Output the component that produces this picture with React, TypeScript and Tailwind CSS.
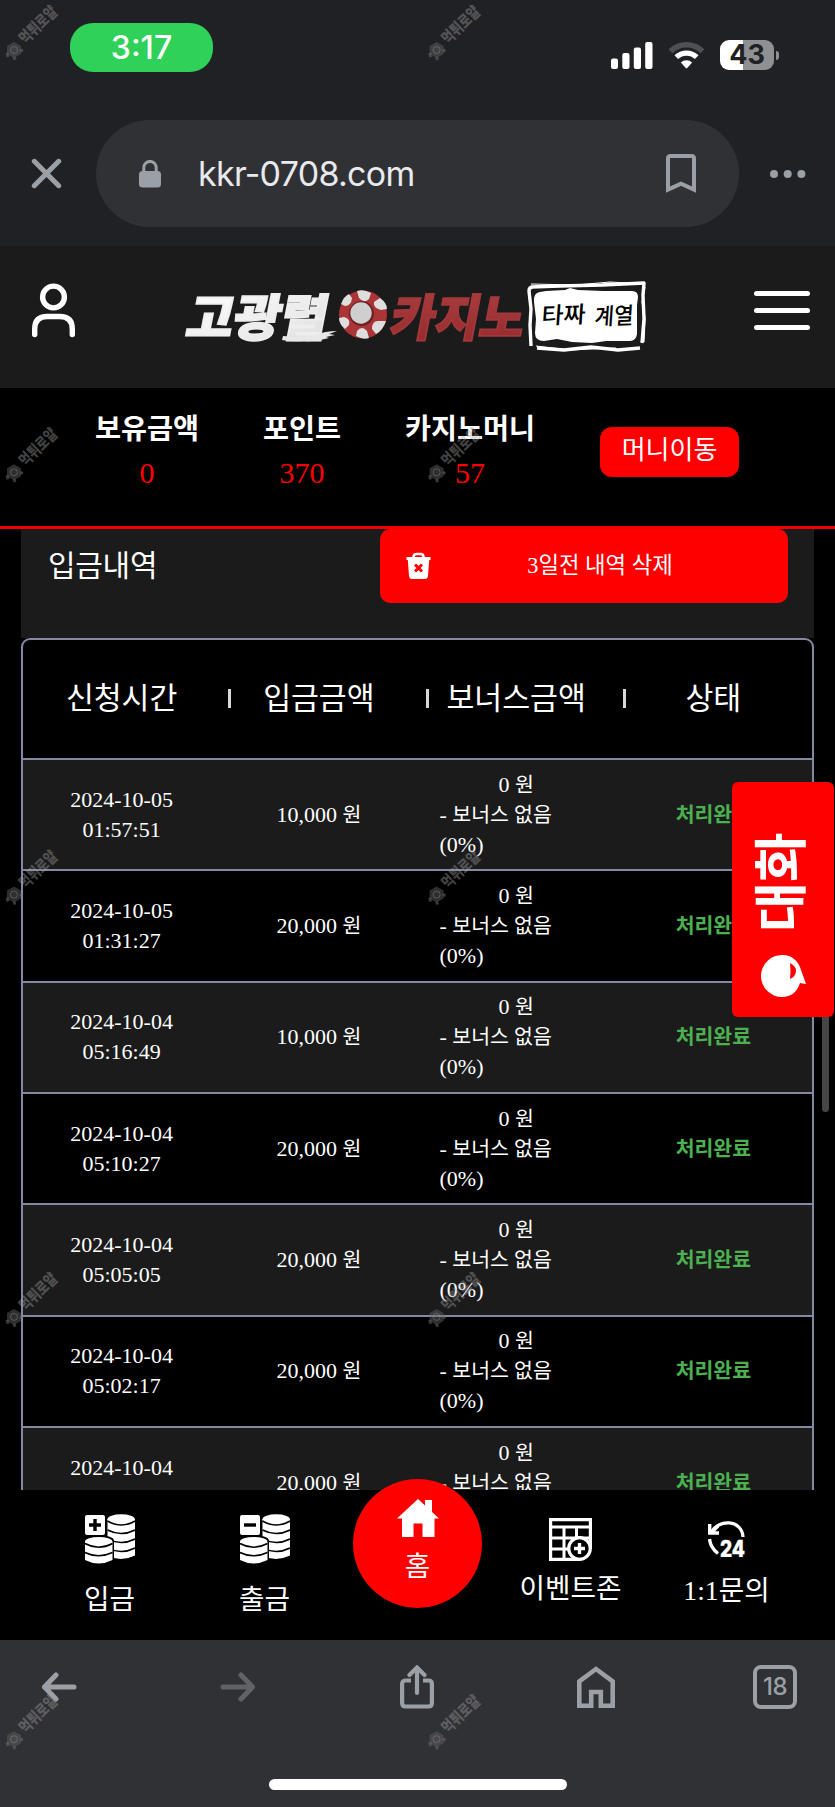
import type { ReactNode } from "react";

interface Deposit {
  date: string;
  time: string;
  amount: string;
}

const DEPOSITS: Deposit[] = [
  { date: "2024-10-05", time: "01:57:51", amount: "10,000" },
  { date: "2024-10-05", time: "01:31:27", amount: "20,000" },
  { date: "2024-10-04", time: "05:16:49", amount: "10,000" },
  { date: "2024-10-04", time: "05:10:27", amount: "20,000" },
  { date: "2024-10-04", time: "05:05:05", amount: "20,000" },
  { date: "2024-10-04", time: "05:02:17", amount: "20,000" },
  { date: "2024-10-04", time: "04:41:14", amount: "20,000" },
];

const HEADERS = ["신청시간", "입금금액", "보너스금액", "상태"];

export default function App() {
  return (
    <div className="relative flex h-[1807px] w-[835px] flex-col overflow-hidden bg-black text-white [font-family:'Liberation_Serif','Noto_Sans_CJK_KR',serif]">
      <StatusBar />
      <AddressBar />
      <SiteHeader />
      <BalanceBar />
      <History />
      <SiteNav />
      <BrowserToolbar />

      {/* Scroll thumb */}
      <div className="absolute top-[940px] left-[822px] h-[172px] w-[7px] rounded-full bg-[#464646]" />
      <ChatTab />
      <Watermarks />
    </div>
  );
}

function StatusBar() {
  return (
    <div className="flex h-[96px] shrink-0 items-start bg-[#202124] pt-[23px] pl-[70px] [font-family:Inter,sans-serif]">
      <div className="flex h-[49px] w-[143px] items-center justify-center rounded-[23px] bg-[#30d158] text-[32px] font-medium">
        <span className="pt-px">3:17</span>
      </div>
      <svg className="mt-[17px] ml-[398px]" width="42" height="30" viewBox="0 0 42 30" fill="#fff">
        <rect x="0" y="18.5" width="7" height="10.5" rx="2" />
        <rect x="11.3" y="13" width="7.2" height="16" rx="2" />
        <rect x="22.8" y="7.5" width="7.2" height="21.5" rx="2" />
        <rect x="34.2" y="2" width="7.3" height="27" rx="2" />
      </svg>
      <svg className="mt-[17px] ml-[15px]" width="37" height="30" viewBox="0 0 37 30">
        <path d="M2.5 11.2a23 23 0 0 1 32 0" fill="none" stroke="#4f5053" strokeWidth="5.4" />
        <path d="M8.3 17.2a14.6 14.6 0 0 1 20.4 0" fill="none" stroke="#fff" strokeWidth="5.2" />
        <path d="M12.8 22.5a8.3 8.3 0 0 1 11.4 0l-5 5.6q-.7.8-1.4 0z" fill="#fff" />
      </svg>
      <div className="mt-[17px] ml-[15px] flex items-center">
        <div className="flex h-[30px] w-[54px] items-center justify-center rounded-[9px] bg-[linear-gradient(90deg,#fff_43%,#8f9092_43%)] text-[27px] font-bold text-[#202124]">
          43
        </div>
        <div className="ml-[2px] h-[9px] w-[3px] rounded-r-full bg-[#8f9092]" />
      </div>
    </div>
  );
}

function AddressBar() {
  return (
    <div className="flex h-[150px] shrink-0 items-start bg-[#202124] pt-[24px] [font-family:Inter,sans-serif]">
      <svg className="mt-[38px] ml-[31px]" width="31" height="31" viewBox="0 0 31 31" stroke="#9aa0a6" strokeWidth="5" strokeLinecap="round">
        <path d="M3.3 3.3l24.4 24.4M27.7 3.3L3.3 27.7" />
      </svg>
      <div className="ml-[34px] flex h-[107px] w-[643px] items-center rounded-full bg-[#303134] pl-[43px]">
        <svg width="22" height="28" viewBox="0 0 22 28">
          <path d="M4.8 13V7.6a6.2 6.2 0 0 1 12.4 0V13" fill="none" stroke="#9aa0a6" strokeWidth="3" />
          <rect x="0" y="11" width="22" height="16.5" rx="3.5" fill="#9aa0a6" />
        </svg>
        <span className="ml-[37px] w-[468px] text-[34px] tracking-[-0.7px] text-[#e8eaed]">kkr-0708.com</span>
        <svg width="30" height="39" viewBox="0 0 30 39" fill="none" stroke="#9aa0a6" strokeWidth="4">
          <path d="M2 35.6V4.5Q2 2 4.500 2h21Q28 2 28 4.500v31.100l-13-6z" />
        </svg>
      </div>
      <svg className="mt-[50px] ml-[31px]" width="36" height="8" viewBox="0 0 36 8" fill="#9aa0a6">
        <circle cx="4" cy="4" r="4" />
        <circle cx="17.700" cy="4" r="4" />
        <circle cx="31.400" cy="4" r="4" />
      </svg>
    </div>
  );
}

function SiteHeader() {
  return (
    <header className="flex h-[142px] shrink-0 items-start bg-[#1b1b1b]">
      <svg className="mt-[36px] ml-[32px]" width="43" height="56" viewBox="0 0 43 56" fill="none" stroke="#fff" strokeWidth="5.400">
        <circle cx="21.500" cy="15" r="10.900" />
        <path d="M2.700 52.500V47q0-12.500 12.500-12.500h12.600q12.500 0 12.500 12.500v5.500" strokeLinecap="round" />
      </svg>
      <Logo />
      <div className="mt-[45px] ml-[104px] flex w-[56px] flex-col gap-3">
        <div className="h-[5px] rounded-full bg-white" />
        <div className="h-[5px] rounded-full bg-white" />
        <div className="h-[5px] rounded-full bg-white" />
      </div>
    </header>
  );
}

function Logo() {
  return (
    <svg className="mt-[29px] ml-[105px] [font-family:'Noto_Sans_CJK_KR',sans-serif]" width="470" height="84" viewBox="180 275 470 84">
      <defs>
        <linearGradient id="steel" x1="0" y1="0" x2="1" y2="1">
          <stop offset="0" stopColor="#fff" />
          <stop offset="0.600" stopColor="#ededed" />
          <stop offset="1" stopColor="#dcdcdc" />
        </linearGradient>
        <linearGradient id="blood" x1="0" y1="0" x2="0" y2="1">
          <stop offset="0" stopColor="#ac4042" />
          <stop offset="1" stopColor="#94282b" />
        </linearGradient>
      </defs>
      <g fontSize="50" fontWeight="900">
        <text transform="translate(184 335.500) skewX(-11)" textLength="141" lengthAdjust="spacingAndGlyphs" fill="url(#steel)" stroke="#eee" strokeWidth="1.800">
          고광렬
        </text>
        <text transform="translate(388 335.500) skewX(-11)" textLength="134" lengthAdjust="spacingAndGlyphs" fill="url(#blood)" stroke="#a3383a" strokeWidth="1.800">
          카지노
        </text>
      </g>
      {/* Brush tail */}
      <path d="M283 336q18 2 31-1 12-4 23-4l-8 3 6 1-9 2 3 1q-13 4-25 3-14 1-22-1z" fill="#e8e8e8" />

      {/* Casino chip */}
      <circle cx="363" cy="314.500" r="24" fill="#ab3436" />
      <g fill="#dedede">
        <path d="M357 291q7-2 14 2l-2 6q-5 5-10-1z" />
        <path d="M380 298q7 5 7 11l-6 1q-8-2-7-8z" />
        <path d="M386 321q-3 9-10 13l-4-5q0-8 6-8z" />
        <path d="M369 338q-6 2-13-2l1-5q5-6 10 0z" />
        <path d="M345 329q-6-5-6-11l5-1q7 2 5 8z" />
        <path d="M341 304q3-8 8-10l3 4q-1 8-7 8z" />
      </g>
      <circle cx="361.500" cy="313.500" r="12.500" fill="#6d2224" />
      <circle cx="361" cy="313" r="10.700" fill="#cfcfcf" />

      {/* Ink stamp */}
      <path
        d="M531 287l29-1 42-1 42-2-1 12 1 24-2 24M640 348l-22 2-27-3-27 3-27-2M531 346l-1-21 1-16-2-18q0-4 4-4"
        fill="none"
        stroke="#fff"
        strokeWidth="3.400"
        strokeLinejoin="round"
      />
      <path d="M531 284l45 1 34-3 35 2M645 287l-3 15 3 16-1 24M536 346l34 4 46-2" fill="none" stroke="#fff" strokeWidth="1.200" />
      <path
        d="M540 292l6-1 19-1 5-2 8 2 25 1 29 0q6 0 6 6l-1 8 0 29q-1 7-7 7l-24 0-14 2-20-1-15-3-13 2q-9 0-9-8l1-14-2-17q-1-9 6-10z"
        fill="#fff"
      />
      <g fill="#000" fontSize="23" fontWeight="500">
        <text transform="translate(541 324) rotate(-2) skewX(-6)" textLength="44" lengthAdjust="spacingAndGlyphs">
          타짜
        </text>
        <text transform="translate(594 325) rotate(-2) skewX(-6)" textLength="39" lengthAdjust="spacingAndGlyphs">
          계열
        </text>
      </g>
    </svg>
  );
}

function Balance({ label, value, width }: { label: string; value: string; width: string }) {
  return (
    <div className={`flex flex-col items-center ${width}`}>
      <span className="text-[28.300px] leading-[44px] font-bold whitespace-nowrap">{label}</span>
      <span className="text-[30px] leading-[42px]">
        <span className="text-[#ff0000]">{value}</span>
      </span>
    </div>
  );
}

function BalanceBar() {
  return (
    <div className="flex h-[141px] shrink-0 items-start border-b-[3px] border-[#f00000] bg-black pt-[20px] pl-[72px]">
      <Balance label="보유금액" value="0" width="w-[150px]" />
      <Balance label="포인트" value="370" width="w-[160px]" />
      <Balance label="카지노머니" value="57" width="w-[176px]" />
      <button className="mt-[19px] ml-[42px] h-[50px] w-[139px] rounded-xl bg-[#ff0000] pb-[3px] text-[26px] leading-none">
        머니이동
      </button>
    </div>
  );
}

function History() {
  return (
    <main className="flex h-[961px] shrink-0 flex-col overflow-hidden px-[21px]">
      <div className="flex h-[109px] w-[793px] shrink-0 items-start bg-[#1b1b1b] pl-[27px]">
        <h2 className="mt-[15px] w-[332px] text-[30px] leading-[44px] tracking-[-0.300px]">입금내역</h2>
        <button className="flex h-[74px] w-[408px] items-center rounded-[10px] bg-[#ff0000] pl-[26px]">
          <svg width="25" height="28" viewBox="0 0 25 28">
            <path d="M7.500 5q0-3 3-3h4q3 0 3 3" fill="none" stroke="#fff" strokeWidth="2.500" />
            <path d="M.5 5h24v3h-1.300L22 24q-.3 3-3.300 3H6.300q-3 0-3.300-3L1.800 8H.5z" fill="#fff" />
            <path d="M9 12.500l7 7M16 12.500l-7 7" stroke="#f00" strokeWidth="3" />
          </svg>
          <span className="w-[338px] pb-px text-center text-[22.300px]">3일전 내역 삭제</span>
        </button>
      </div>

      <div className="w-[793px] shrink-0 rounded-t-[9px] border-2 border-[#8389a5]">
        <div className="grid h-[118px] grid-cols-4 items-center">
          {HEADERS.map((header, i) => (
            <div key={header} className="relative text-center text-[30.300px] leading-[44px]">
              {header}
              {i < HEADERS.length - 1 && <i className="absolute top-[12px] right-[-11px] h-[19px] w-[3px] bg-[#d8d8d8]" />}
            </div>
          ))}
        </div>
        {DEPOSITS.map((deposit, i) => (
          <DepositRow key={i} deposit={deposit} />
        ))}
      </div>
    </main>
  );
}

function Won() {
  return <span className="text-[20.500px]">원</span>;
}

function DepositRow({ deposit }: { deposit: Deposit }) {
  return (
    <div className="grid h-[111.330px] grid-cols-4 items-center border-t-2 border-[#8389a5] text-center text-[22px] leading-[30px] odd:bg-black even:bg-[#1b1b1b]">
      <div>
        {deposit.date}
        <br />
        {deposit.time}
      </div>
      <div>
        {deposit.amount} <Won />
      </div>
      <div className="px-[22px]">
        <div>
          0 <Won />
        </div>
        <div className="text-left">
          - <span className="text-[20.500px]">보너스 없음</span>
          <br />
          (0%)
        </div>
      </div>
      <div className="text-[20.500px] font-bold text-[#4caf50]">처리완료</div>
    </div>
  );
}

function ChatTab() {
  return (
    <div className="absolute top-[782px] left-[732px] flex h-[235px] w-[102px] flex-col items-center rounded-md bg-[#ff0000] pt-[45px]">
      <div className="flex h-[110px] w-[102px] items-center justify-center">
        <span className="-rotate-90 text-[54px] leading-none font-bold whitespace-nowrap">대화</span>
      </div>
      <svg className="mt-[17px] ml-[-1px]" width="46" height="44" viewBox="0 0 46 44">
        <path d="M22 1C34 1 39 9 41 16l5 14-6-1C37 38 31 43 22 43A21 21 0 0 1 22 1z" fill="#fff" />
        <path d="M30 9q6 3 6 8t-6 8q1-8 0-16z" fill="#f00" />
      </svg>
    </div>
  );
}

function Coins({ sign }: { sign: "plus" | "minus" }) {
  return (
    <svg width="50" height="50" viewBox="0 0 50 50">
      <rect x="0" y="1" width="20" height="20" rx="2" fill="#fff" />
      <path d={sign === "plus" ? "M4 11h12M10 5v12" : "M4 11h12"} stroke="#000" strokeWidth="3.400" />
      <path d="M22.500 5v36.500q13 7 27.500 0V5z" fill="#fff" />
      <ellipse cx="36.200" cy="5.300" rx="13.700" ry="5" fill="#fff" />
      <path d="M22.500 7q13.500 8 27.500 0M22.500 16q13.500 7 27.500 0M22.500 25q13.500 7 27.500 0M22.500 34q13.500 7 27.500 0" fill="none" stroke="#000" strokeWidth="1.600" />
      <path d="M-1 27q0-5.500 15-5.500T29 27v19H-1z" fill="#000" />
      <path d="M0 28v18q13.500 7 27.500 0V28z" fill="#fff" />
      <ellipse cx="13.700" cy="27.600" rx="13.700" ry="4.600" fill="#fff" />
      <path d="M0 29.500q13.500 7.500 27.500 0M0 38.500q13.500 6.500 27.500 0" fill="none" stroke="#000" strokeWidth="1.600" />
    </svg>
  );
}

function NavItem({ icon, label, className }: { icon: ReactNode; label: string; className: string }) {
  return (
    <div className={`flex h-full flex-col items-center ${className}`}>
      {icon}
      <span className="leading-[40px] whitespace-nowrap">{label}</span>
    </div>
  );
}

function SiteNav() {
  return (
    <nav className="flex h-[150px] shrink-0 items-start bg-black text-[27.700px]">
      <NavItem className="ml-[32px] w-[155px] gap-[16px] pt-[24px]" icon={<Coins sign="plus" />} label="입금" />
      <NavItem className="w-[155px] gap-[16px] pt-[24px]" icon={<Coins sign="minus" />} label="출금" />
      <div className="mt-[-11px] ml-[11px] flex h-[129px] w-[129px] flex-col items-center rounded-full bg-[#ff0000] pt-[20px]">
        <svg width="42" height="38" viewBox="0 0 42 38" fill="#fff">
          <path d="M21 0l7 6.500V1h7v12l7 6.500h-4.500V38h-12V24.500h-9V38H5V19.500H0z" />
        </svg>
        <span className="mt-[10px] leading-[40px]">홈</span>
      </div>
      <NavItem
        className="ml-[11px] w-[155px] gap-[8px] pt-[28px]"
        label="이벤트존"
        icon={
          <svg width="43" height="43" viewBox="0 0 43 43">
            <path d="M1.600 1.600h39.800v39.800H1.600z" fill="none" stroke="#fff" strokeWidth="3.200" />
            <path d="M2 9h39M2 20h39M2 31h24M15 9v32M27.500 9v16" stroke="#fff" strokeWidth="3" />
            <path d="M31 31h12v12H31z" fill="#000" />
            <circle cx="30.500" cy="30.500" r="10.800" fill="#000" stroke="#fff" strokeWidth="3.200" />
            <path d="M25 30.500h11M30.500 25v11" stroke="#fff" strokeWidth="3.400" />
          </svg>
        }
      />
      <NavItem
        className="ml-px w-[155px] gap-[14px] pt-[31px]"
        label="1:1문의"
        icon={
          <svg width="37" height="36" viewBox="0 0 37 36" fill="none" stroke="#fff">
            <path d="M3 11.500C10-2 34-2 35 16" strokeWidth="3.200" />
            <path d="M1.700 3v9h9.300M3 12l7-7" strokeWidth="3.400" />
            <path d="M1.500 18q1 9 8.500 14.500" strokeWidth="3.400" />
            <text x="12" y="36" textLength="25" lengthAdjust="spacingAndGlyphs" fill="#fff" strokeWidth="0.500" fontSize="22.500" fontWeight="800" fontFamily="Inter, sans-serif">
              24
            </text>
          </svg>
        }
      />
    </nav>
  );
}

function BrowserToolbar() {
  return (
    <div className="flex grow flex-col items-center bg-[#303134] [font-family:Inter,sans-serif]">
      <div className="flex h-[94px] w-full items-center justify-between pr-[38px] pl-[37px] *:w-[44px]">
        <svg height="30" viewBox="-4.500 0 44 30" fill="none" stroke="#9aa0a6" strokeWidth="5" strokeLinecap="round" strokeLinejoin="round">
          <path d="M32.500 15H3M14.500 3L3 15l11.500 12" />
        </svg>
        <svg height="30" viewBox="-4.500 0 44 30" fill="none" stroke="#5f6368" strokeWidth="5" strokeLinecap="round" strokeLinejoin="round">
          <path d="M2.500 15H32M20.500 3L32 15 20.500 27" />
        </svg>
        <svg height="44" viewBox="-5 0 44 44" fill="none" stroke="#9aa0a6" strokeWidth="4.200">
          <path d="M11 15.500H5.500Q2.100 15.500 2.100 19v19q0 3.500 3.400 3.500h23q3.400 0 3.400-3.500V19q0-3.500-3.400-3.500H23" />
          <path d="M17 28V3M9.500 10L17 2.500l7.500 7.500" strokeLinecap="round" />
        </svg>
        <svg height="44" viewBox="-3 0 44 44" fill="none" stroke="#9aa0a6" strokeWidth="4.600">
          <path d="M2.300 40.700V16.500L19 4l16.700 12.500v24.200H23.800V27h-9.600v13.700z" />
        </svg>
        <div className="flex h-[44px] items-center justify-center rounded-[8px] border-4 border-[#9aa0a6] text-[24px] font-medium tracking-[-0.500px] text-[#9aa0a6]">
          18
        </div>
      </div>
      <div className="mt-[45px] h-[11px] w-[298px] rounded-full bg-white" />
    </div>
  );
}

const MARK_ROWS = [0, 422.3, 844.6, 1266.9, 1689.2];
const MARK_COLS = [0, 422.6];

// Repeating badge printed diagonally over everything
function Watermarks() {
  return (
    <svg className="pointer-events-none absolute inset-0" width="835" height="1807" viewBox="0 0 835 1807">
      {MARK_ROWS.map((y) =>
        MARK_COLS.map((x) => (
          <g key={`${x}-${y}`} transform={`translate(${x} ${y})`}>
            <path d="M14 42l7 4v8l-7 4-7-4v-8z" fill="#666" fillOpacity="0.450" />
            <path d="M7 53l1 4M14 57l1 3M20 50l3 1" stroke="#777" strokeOpacity="0.450" strokeWidth="3" />
            <circle cx="14" cy="50" r="3.500" fill="none" stroke="#999" strokeOpacity="0.400" />
            <text
              transform="translate(25.500 45) rotate(-44)"
              textLength="46"
              lengthAdjust="spacingAndGlyphs"
              fill="#a0a0a0"
              fillOpacity="0.420"
              fontSize="16"
              fontWeight="900"
              fontFamily="Noto Sans CJK KR, sans-serif"
            >
              먹튀로얄
            </text>
          </g>
        )),
      )}
    </svg>
  );
}
